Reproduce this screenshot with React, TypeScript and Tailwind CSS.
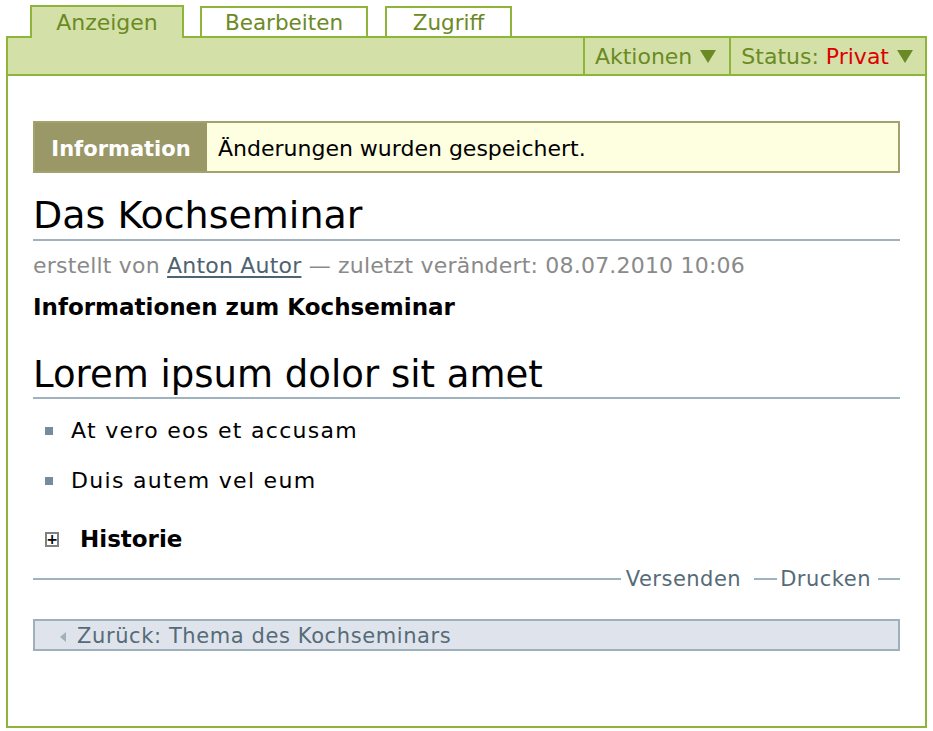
import React from "react";

const font = { fontFamily: '"DejaVu Sans", "Lucida Grande", sans-serif' };

function Tab({ label, active }: { label: string; active?: boolean }) {
  return (
    <div
      className={
        active
          ? "relative z-10 -mb-[2px] h-[33px] border-2 border-b-0 border-[#8fb43a] bg-[#d3e1a9] text-center text-[22px] leading-[31px] text-[#6b8a23]"
          : "mt-[1px] h-[30px] border-2 border-b-0 border-[#8fb43a] bg-white text-center text-[21.5px] leading-[29px] text-[#6b8a23]"
      }
    >
      {label}
    </div>
  );
}

function Arrow() {
  return (
    <svg width="16" height="14" viewBox="0 0 16 14">
      <polygon points="0,1 16,1 8,14" fill="#6b8a23" />
    </svg>
  );
}

export default function App() {
  return (
    <div className="h-[731px] w-[933px] bg-white px-[6px] pt-[5px]" style={font}>
      <div className="flex pl-[24px]">
        <div className="w-[154px]">
          <Tab label="Anzeigen" active />
        </div>
        <div className="ml-[16px] w-[168px]">
          <Tab label="Bearbeiten" />
        </div>
        <div className="ml-[17px] w-[127px]">
          <Tab label="Zugriff" />
        </div>
      </div>

      <div className="h-[692px] w-[921px] border-2 border-[#8fb43a]">
        <div className="flex h-[38px] justify-end border-b-2 border-[#8fb43a] bg-[#d3e1a9] text-[22px] text-[#6b8a23]">
          <div className="flex items-center gap-[8px] border-l-2 border-[#8fb43a] pl-[10px] pr-[13px]">
            <span>Aktionen</span>
            <Arrow />
          </div>
          <div className="flex items-center gap-[8px] border-l-2 border-[#8fb43a] pl-[10px] pr-[12px]">
            <span>
              Status: <span className="text-[#dd0000]">Privat</span>
            </span>
            <Arrow />
          </div>
        </div>

        <div className="px-[25px] pt-[45px]">
          <div className="flex h-[52px] border-2 border-[#a3a26d]">
            <div className="flex w-[172px] items-center justify-center bg-[#9b9867] pt-[5px] text-[21px] font-bold text-white">
              Information
            </div>
            <div className="flex flex-1 items-center bg-[#fefee0] pl-[11px] pt-[2px] text-[22px] text-black">
              Änderungen wurden gespeichert.
            </div>
          </div>

          <h1 className="mt-[20px] border-b-2 border-[#a1b2bf] pb-[2px] text-[38px] leading-[44px] text-black">
            Das Kochseminar
          </h1>

          <div className="mt-[10px] text-[22px] leading-[30px] tracking-[0.2px] text-[#8a8a8a]">
            erstellt von{" "}
            <span className="text-[#4e6371] underline decoration-[#4e6371] underline-offset-[3px]">
              Anton Autor
            </span>{" "}
            — zuletzt verändert: 08.07.2010 10:06
          </div>

          <div className="mt-[11px] text-[23px] font-bold leading-[30px] text-black">
            Informationen zum Kochseminar
          </div>

          <h2 className="mt-[31px] border-b-2 border-[#a1b2bf] pb-0 text-[37px] leading-[44px] text-black">
            Lorem ipsum dolor sit amet
          </h2>

          <ul className="mt-[17px] flex flex-col gap-[20px] text-[22px] leading-[30px] tracking-[1.3px] text-black">
            <li className="flex items-center">
              <span className="ml-[12px] mr-[18px] h-[8px] w-[8px] bg-[#758c9a]" />
              At vero eos et accusam
            </li>
            <li className="flex items-center">
              <span className="ml-[12px] mr-[18px] h-[8px] w-[8px] bg-[#758c9a]" />
              Duis autem vel eum
            </li>
          </ul>

          <div className="mt-[28px] flex items-center text-[23px] font-bold leading-[30px] text-black">
            <span className="ml-[12px] mr-[21px] flex h-[15px] w-[14px] items-center justify-center border-2 border-[#808080] bg-white text-[14px] font-bold leading-none">
              +
            </span>
            Historie
          </div>

          <div className="mt-[10px] flex items-center text-[21px] leading-[30px] tracking-[0.5px] text-[#566b78]">
            <div className="h-[2px] flex-1 bg-[#a1b2bf]" />
            <span className="ml-[5px]">Versenden</span>
            <div className="ml-[13px] mr-[3px] h-[2px] w-[23px] bg-[#a1b2bf]" />
            <span>Drucken</span>
            <div className="ml-[7px] h-[2px] w-[22px] bg-[#a1b2bf]" />
          </div>

          <div className="mt-[25px] flex h-[32px] items-center border-2 border-[#9fb0bd] bg-[#dfe4ec] pt-[4px] text-[21px] tracking-[0.6px] text-[#566b78]">
            <svg width="8" height="12" viewBox="0 0 8 12" className="ml-[24px] mr-[10px]">
              <polygon points="7,1 7,11 1,6" fill="#a1b0bb" />
            </svg>
            Zurück: Thema des Kochseminars
          </div>
        </div>
      </div>
    </div>
  );
}
